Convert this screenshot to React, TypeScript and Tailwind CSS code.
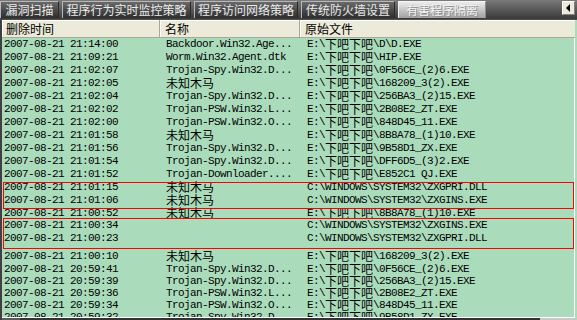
import type { ReactNode } from "react";

type Row = { time: string; name: string; path: string; h: number };

const D = "E:\\下吧下吧\\";
const SYS = "C:\\WINDOWS\\SYSTEM32\\";

const rows: Row[] = [
  { time: "2007-08-21 21:14:00", name: "Backdoor.Win32.Age...", path: D + "D\\D.EXE", h: 13 },
  { time: "2007-08-21 21:09:21", name: "Worm.Win32.Agent.dtk", path: D + "HIP.EXE", h: 13 },
  { time: "2007-08-21 21:02:07", name: "Trojan-Spy.Win32.D...", path: D + "0F56CE_(2)6.EXE", h: 13 },
  { time: "2007-08-21 21:02:05", name: "未知木马", path: D + "168209_3(2).EXE", h: 13 },
  { time: "2007-08-21 21:02:04", name: "Trojan-Spy.Win32.D...", path: D + "256BA3_(2)15.EXE", h: 13 },
  { time: "2007-08-21 21:02:02", name: "Trojan-PSW.Win32.L...", path: D + "2B08E2_ZT.EXE", h: 13 },
  { time: "2007-08-21 21:02:00", name: "Trojan-PSW.Win32.O...", path: D + "848D45_11.EXE", h: 13 },
  { time: "2007-08-21 21:01:58", name: "未知木马", path: D + "8B8A78_(1)10.EXE", h: 13 },
  { time: "2007-08-21 21:01:56", name: "Trojan-Spy.Win32.D...", path: D + "9B58D1_ZX.EXE", h: 13 },
  { time: "2007-08-21 21:01:54", name: "Trojan-Spy.Win32.D...", path: D + "DFF6D5_(3)2.EXE", h: 13 },
  { time: "2007-08-21 21:01:52", name: "Trojan-Downloader....", path: D + "E852C1 QJ.EXE", h: 13 },
  { time: "2007-08-21 21:01:15", name: "未知木马", path: SYS + "ZXGPRI.DLL", h: 13 },
  { time: "2007-08-21 21:01:06", name: "未知木马", path: SYS + "ZXGINS.EXE", h: 13 },
  { time: "2007-08-21 21:00:52", name: "未知木马", path: D + "8B8A78_(1)10.EXE", h: 12 },
  { time: "2007-08-21 21:00:34", name: "", path: SYS + "ZXGINS.EXE", h: 13 },
  { time: "2007-08-21 21:00:23", name: "", path: SYS + "ZXGPRI.DLL", h: 18 },
  { time: "2007-08-21 21:00:10", name: "未知木马", path: D + "168209_3(2).EXE", h: 13 },
  { time: "2007-08-21 20:59:41", name: "Trojan-Spy.Win32.D...", path: D + "0F56CE_(2)6.EXE", h: 12 },
  { time: "2007-08-21 20:59:39", name: "Trojan-Spy.Win32.D...", path: D + "256BA3_(2)15.EXE", h: 12 },
  { time: "2007-08-21 20:59:36", name: "Trojan-PSW.Win32.L...", path: D + "2B08E2_ZT.EXE", h: 12 },
  { time: "2007-08-21 20:59:34", name: "Trojan-PSW.Win32.O...", path: D + "848D45_11.EXE", h: 12 },
  { time: "2007-08-21 20:59:32", name: "Trojan-Spy.Win32.D...", path: D + "9B58D1_ZX.EXE", h: 12 },
];

const tabs = [
  { label: "漏洞扫描", w: "w-[59px]" },
  { label: "程序行为实时监控策略", w: "w-[129px]" },
  { label: "程序访问网络策略", w: "w-[104px]" },
  { label: "传统防火墙设置", w: "w-[94px]" },
  { label: "有害程序隔离", w: "w-[88px]", active: true },
];

// split latin / cjk so each run gets the right face and size
const Mixed = ({ text }: { text: string }) => {
  const parts = text.match(/[\u4e00-\u9fff]+|[^\u4e00-\u9fff]+/g) ?? [];
  const out: ReactNode[] = parts.map((p, i) =>
    /[\u4e00-\u9fff]/.test(p) ? (
      <span key={i} className="inline-block h-[12px] align-top font-['Noto_Sans_CJK_SC',sans-serif] text-[12px] leading-[12px] tracking-normal">{p}</span>
    ) : (
      <span key={i} className="inline-block h-[12px] align-top font-['Liberation_Mono',monospace] text-[11px] leading-[12px] tracking-[-0.6px]">{p}</span>
    ),
  );
  return <>{out}</>;
};

export default function App() {
  return (
    <div className="flex h-[320px] w-[577px] flex-col overflow-hidden bg-[#d4d0c8] font-['Noto_Sans_CJK_SC',sans-serif] text-black">
      {/* tab strip */}
      <div className="flex h-[19px] shrink-0 items-start bg-gradient-to-b from-[#7a7a7a] to-[#3a3a3a]">
        <div className="flex gap-[3px] pt-[1px]">
          {tabs.map((t) => (
            <div key={t.label}
              className={`flex h-[17px] items-center justify-center border-l border-t border-r text-[12px] leading-none ${t.w} ${
                t.active
                  ? "border-[#f4f4f4] border-r-[#8a8a8a] bg-gradient-to-b from-[#ececec] to-[#a0a0a0] text-[#f4f4f4] [text-shadow:1px_1px_0_#8c8c8c]"
                  : "border-[#b8b8b8] border-r-[#2a2a2a] bg-gradient-to-b from-[#6a6a6a] to-[#2e2e2e] text-[#ececec]"
              }`}>
              {t.label}
            </div>
          ))}
        </div>
        <div className="ml-auto mr-[2px] mt-[1px] flex h-[14px] w-[13px] items-center justify-center border border-b-[#808080] border-l-white border-r-[#808080] border-t-white bg-[#ece9d8]">
          <svg width="5" height="8" viewBox="0 0 5 8"><path d="M4 0 L0 4 L4 8 Z" fill="#000" /></svg>
        </div>
      </div>

      {/* list view */}
      <div className="flex min-h-0 flex-1 flex-col border-l-2 border-t border-[#404040] border-t-[#505050] bg-[#aadcbc] pr-[2px]">
        <div className="flex h-[18px] shrink-0 border-b border-[#aca899] bg-[#ecead8] text-[12px] leading-none">
          <div className="flex w-[158px] items-center border-r border-[#aca899] pl-[4px] shadow-[inset_1px_1px_0_#fff]">删除时间</div>
          <div className="flex w-[140px] items-center border-r border-[#aca899] pl-[5px] shadow-[inset_1px_1px_0_#fff]">名称</div>
          <div className="flex flex-1 items-center pl-[5px] shadow-[inset_1px_1px_0_#fff]">原始文件</div>
        </div>

        <div className="relative min-h-0 flex-1 overflow-hidden border-r border-white">
          {rows.map((r, i) => (
            <div key={i} className="flex items-start whitespace-nowrap text-[11px] leading-[12px]" style={{ height: r.h }}>
              <div className="h-[12px] w-[158px] pl-[2px]"><Mixed text={r.time} /></div>
              <div className="h-[12px] w-[140px] pl-[6px]"><Mixed text={r.name} /></div>
              <div className="h-[12px] flex-1 pl-[7px]"><Mixed text={r.path} /></div>
            </div>
          ))}

          {/* red annotation boxes */}
          <div className="absolute left-[1px] top-[144px] z-10 h-[27px] w-[571px] border border-[#ff0000]" />
          <div className="absolute left-[1px] top-[180px] z-10 h-[31px] w-[571px] border border-[#ff0000]" />
        </div>

        <div className="flex h-[3px] shrink-0 border-t border-white">
          <div className="w-[18px] bg-[#5a5a5a]" />
          <div className="flex-1 bg-[#333333]" />
          <div className="w-[35px] bg-[#c8c8c8]" />
        </div>
      </div>
    </div>
  );
}
